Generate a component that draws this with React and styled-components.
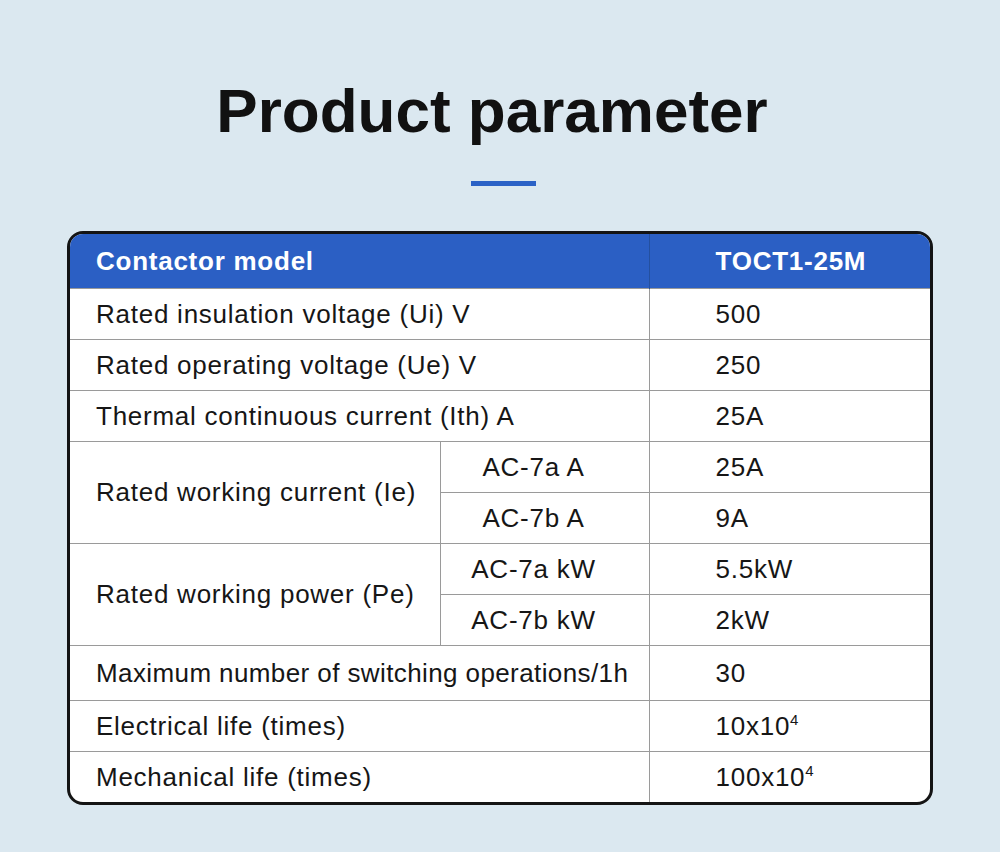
import React from 'react';
import styled, { createGlobalStyle } from 'styled-components';

const GlobalStyle = createGlobalStyle`
  html, body {
    margin: 0;
    padding: 0;
    background: #dbe8f0;
  }
`

const Page = styled.div`
  width: 1000px;
  height: 852px;
  box-sizing: border-box;
  padding-top: 80px;
  background: #dbe8f0;
  font-family: "Liberation Sans", Arial, sans-serif;
  color: #161616;
  display: flex;
  flex-direction: column;
  align-items: center;
`

const Title = styled.h1`
  margin: 0 16px 0 0;
  font-size: 62px;
  line-height: 62px;
  font-weight: bold;
  color: #111;
`

const Bar = styled.div`
  width: 65px;
  height: 5px;
  margin: 39px 0 45px 7px;
  background: #2b62c6;
`

const Frame = styled.div`
  width: 866px;
  box-sizing: border-box;
  border: 3px solid #141414;
  border-radius: 16px;
  overflow: hidden;
  background: #fff;
`

const Table = styled.table`
  width: 100%;
  border-collapse: collapse;
  table-layout: fixed;
  font-size: 26px;
  letter-spacing: 0.75px;
`

const HeadRow = styled.tr`
  height: 54px;
  background: #2b5fc4;
  color: #fff;
  font-weight: bold;
`

const Row = styled.tr`
  height: ${p => (p.$tall ? 55 : 51)}px;
`

const Cell = styled.td`
  padding: 0 0 0 ${p => (p.$value ? 66 : 26)}px;
  border-top: ${p => (p.$head ? 'none' : '1px solid #9a9a9a')};
  border-left: ${p => (p.$first ? 'none' : p.$head ? '1px solid #24509f' : '1px solid #9a9a9a')};
  vertical-align: middle;
  white-space: nowrap;
  line-height: 1;
`

const TightCell = styled(Cell)`
  letter-spacing: 0.4px;
`

const SubCell = styled(Cell)`
  padding: 0 22px 0 0;
  text-align: center;
`

const Sup = styled.sup`
  font-size: 15px;
  vertical-align: 10px;
  letter-spacing: 0;
`

const simple = [
  ['Rated insulation voltage (Ui) V', '500'],
  ['Rated operating voltage (Ue) V', '250'],
  ['Thermal continuous current (Ith) A', '25A'],
]

const groups = [
  {
    label: 'Rated working current (Ie)',
    items: [['AC-7a A', '25A'], ['AC-7b A', '9A']],
  },
  {
    label: 'Rated working power (Pe)',
    items: [['AC-7a kW', '5.5kW'], ['AC-7b kW', '2kW']],
  },
]

export default function App() {
  return (
    <Page>
      <GlobalStyle />
      <Title>Product parameter</Title>
      <Bar />
      <Frame>
        <Table>
          <colgroup>
            <col style={{ width: 370 }} />
            <col style={{ width: 209 }} />
            <col style={{ width: 281 }} />
          </colgroup>
          <tbody>
            <HeadRow>
              <Cell $head $first colSpan={2}>Contactor model</Cell>
              <Cell $head $value>TOCT1-25M</Cell>
            </HeadRow>
            {simple.map(([k, v]) => (
              <Row key={k}>
                <Cell $first colSpan={2}>{k}</Cell>
                <Cell $value>{v}</Cell>
              </Row>
            ))}
            {groups.map(g =>
              g.items.map(([sub, v], i) => (
                <Row key={sub}>
                  {i === 0 && <Cell $first rowSpan={2}>{g.label}</Cell>}
                  <SubCell>{sub}</SubCell>
                  <Cell $value>{v}</Cell>
                </Row>
              ))
            )}
            <Row $tall>
              <TightCell $first colSpan={2}>Maximum number of switching operations/1h</TightCell>
              <Cell $value>30</Cell>
            </Row>
            <Row>
              <Cell $first colSpan={2}>Electrical life (times)</Cell>
              <Cell $value>10x10<Sup>4</Sup></Cell>
            </Row>
            <Row>
              <Cell $first colSpan={2}>Mechanical life (times)</Cell>
              <Cell $value>100x10<Sup>4</Sup></Cell>
            </Row>
          </tbody>
        </Table>
      </Frame>
    </Page>
  );
}
